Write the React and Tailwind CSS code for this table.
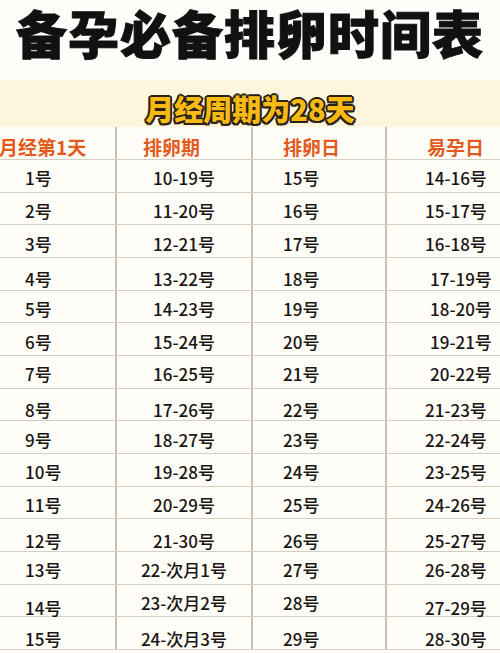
import React from 'react';

const font = "font-['Noto_Sans_CJK_SC','Noto_Sans',sans-serif]";

// [月经第1天, 排卵期, 排卵日, 易孕日, vertical nudge, shift last col]
const rows = [
  ['1号', '10-19号', '15号', '14-16号', 0, false],
  ['2号', '11-20号', '16号', '15-17号', 0, false],
  ['3号', '12-21号', '17号', '16-18号', 0, false],
  ['4号', '13-22号', '18号', '17-19号', 1, true],
  ['5号', '14-23号', '19号', '18-20号', 0, true],
  ['6号', '15-24号', '20号', '19-21号', 0, true],
  ['7号', '16-25号', '21号', '20-22号', 0, true],
  ['8号', '17-26号', '22号', '21-23号', 1, false],
  ['9号', '18-27号', '23号', '22-24号', 0, false],
  ['10号', '19-28号', '24号', '23-25号', 0, false],
  ['11号', '20-29号', '25号', '24-26号', 0, false],
  ['12号', '21-30号', '26号', '25-27号', 1, false],
  ['13号', '22-次月1号', '27号', '26-28号', 0, false],
  ['14号', '23-次月2号', '28号', '27-29号', 2, false],
  ['15号', '24-次月3号', '29号', '28-30号', 1, false],
];

const nudge = ['pt-[4px]', 'pt-[10px]', 'pt-[14px]'];

export default function App() {
  return (
    <div className={`w-[500px] h-[653px] overflow-hidden bg-[#fffdf9] ${font}`}>
      {/* Title */}
      <div className="h-[80px] flex items-center justify-center pb-[14px]">
        <h1 className="text-[51px] leading-[1.25] font-black tracking-[1px] text-[#111] [-webkit-text-stroke:1px_#111] whitespace-nowrap">
          备孕必备排卵时间表
        </h1>
      </div>

      {/* Cycle band */}
      <div className="h-[47px] bg-[#fdf5dc] flex items-center justify-center pt-[9px]">
        <span className="text-[29px] leading-[1.2] font-black text-[#f7ba12] [text-shadow:-1.5px_-1.5px_0_#2a2118,1.5px_-1.5px_0_#2a2118,-1.5px_1.5px_0_#2a2118,1.5px_1.5px_0_#2a2118,0_2px_0_#2a2118,0_-2px_0_#2a2118,2px_0_0_#2a2118,-2px_0_0_#2a2118]">
          月经周期为28天
        </span>
      </div>

      {/* Table */}
      <div className="bg-[#fffdf8]">
        <div className="grid grid-cols-[117px_136px_134px_113px] h-[33px] border-b-[1.5px] border-[#d6cec2] text-[19px] font-bold text-[#e35a1c] leading-none">
          <div className="flex items-center pt-[6px] -ml-[1px] border-r-2 border-[#c9c0b3]">月经第1天</div>
          <div className="flex items-center pt-[6px] pl-[26px] border-r-2 border-[#c9c0b3]">排卵期</div>
          <div className="flex items-center pt-[6px] pl-[30px] border-r-2 border-[#c9c0b3]">排卵日</div>
          <div className="flex items-center pt-[6px] pl-[40px]">易孕日</div>
        </div>

        {rows.map(([a, b, c, d, dy, shift]) => (
          <div
            key={a}
            className="grid grid-cols-[117px_136px_134px_113px] h-[32.67px] border-b-[1.5px] border-[#d6cec2] text-[17px] font-medium text-[#1a1614] leading-none"
          >
            <div className={`flex items-center pl-[25px] border-r-2 border-[#c9c0b3] ${nudge[dy]}`}>{a}</div>
            <div className={`flex items-center justify-center border-r-2 border-[#c9c0b3] ${nudge[dy === 2 ? 0 : dy]}`}>{b}</div>
            <div className={`flex items-center pl-[30px] border-r-2 border-[#c9c0b3] ${nudge[dy === 2 ? 0 : dy]}`}>{c}</div>
            <div className={`flex items-center ${shift ? 'pl-[43px]' : 'pl-[38px]'} ${nudge[dy]}`}>{d}</div>
          </div>
        ))}
      </div>
    </div>
  );
}
